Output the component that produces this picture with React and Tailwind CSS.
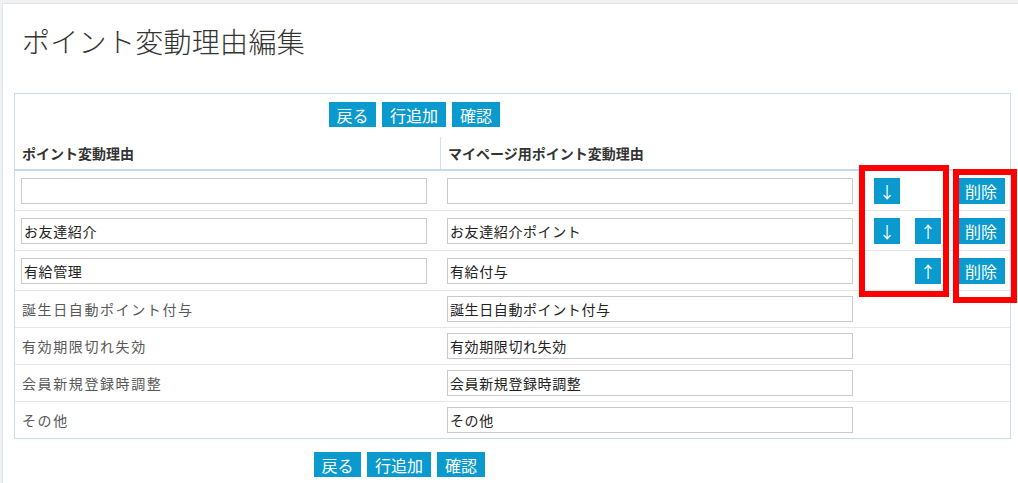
import React from 'react';

const font = { fontFamily: '"Noto Sans CJK JP", "Noto Sans", sans-serif' };

const editRows = [
  { a: '', b: '', down: true, up: false },
  { a: 'お友達紹介', b: 'お友達紹介ポイント', down: true, up: true },
  { a: '有給管理', b: '有給付与', down: false, up: true },
];

const fixedRows = [
  { a: '誕生日自動ポイント付与', b: '誕生日自動ポイント付与' },
  { a: '有効期限切れ失効', b: '有効期限切れ失効' },
  { a: '会員新規登録時調整', b: '会員新規登録時調整' },
  { a: 'その他', b: 'その他' },
];

const BlueBtn = ({ children, className = '' }) => (
  <button className={`h-[25px] bg-[#0b9acd] text-white text-[16px] leading-none flex items-center justify-center ${className}`}>
    {children}
  </button>
);

const TextBox = ({ value }) => (
  <input
    readOnly
    value={value}
    className="w-[406px] h-[26px] border border-[#cacaca] bg-white px-[2px] text-[14px] tracking-[0.6px] text-[#222] outline-none"
    style={font}
  />
);

const Actions = () => (
  <div className="flex gap-[6px]">
    <BlueBtn className="w-[47px]">戻る</BlueBtn>
    <BlueBtn className="w-[64px]">行追加</BlueBtn>
    <BlueBtn className="w-[48px]">確認</BlueBtn>
  </div>
);

export default function App() {
  return (
    <div className="relative min-h-screen bg-[#f1f1f1] pt-[3px] pl-[2px]" style={font}>
      <div className="bg-white border-l border-t border-[#d6e7f5] h-[480px] pl-[11px] pr-[7px]">
        <h1 className="pl-[8px] pt-[17px] h-[89px] text-[28px] leading-[40px] font-light text-[#333] tracking-[0.3px]">
          ポイント変動理由編集
        </h1>

        <div className="border border-[#c6dcf1]">
          <div className="pt-[8px] pb-[10px] pl-[314px]">
            <Actions />
          </div>

          <div className="flex h-[34px] border-b-2 border-[#c3daf1] text-[14px] font-bold text-[#333]">
            <div className="w-[425px] pl-[7px] flex items-center">ポイント変動理由</div>
            <div className="border-l border-[#cfe2f4] pl-[7px] flex items-center">マイページ用ポイント変動理由</div>
          </div>

          {editRows.map((r, i) => (
            <div key={i} className="flex items-center h-[40px] border-b border-[#e6e6e6]">
              <div className="w-[425px] pl-[6px]">
                <TextBox value={r.a} />
              </div>
              <div className="w-[420px] pl-[7px]">
                <TextBox value={r.b} />
              </div>
              <div className="flex pl-[14px] w-[97px]">
                {r.down ? (
                  <BlueBtn className="w-[26px] h-[26px] text-[16px]">↓</BlueBtn>
                ) : (
                  <div className="w-[26px]" />
                )}
                {r.up && <BlueBtn className="ml-[15px] w-[26px] h-[26px] text-[16px]">↑</BlueBtn>}
              </div>
              <BlueBtn className="w-[48px] h-[26px] text-[14px]">削除</BlueBtn>
            </div>
          ))}

          {fixedRows.map((r, i) => {
            const last = i === fixedRows.length - 1;
            return (
              <div
                key={i}
                className={`flex items-center ${last ? 'h-[36px]' : 'h-[37px] border-b border-[#e6e6e6]'}`}
              >
                <div className="w-[425px] pl-[7px] text-[14px] tracking-[1.6px] text-[#585858]">{r.a}</div>
                <div className="w-[420px] pl-[7px]">
                  <TextBox value={r.b} />
                </div>
              </div>
            );
          })}
        </div>

        <div className="pt-[13px] pl-[300px]">
          <Actions />
        </div>
      </div>

      {/* red annotation boxes */}
      <div className="absolute left-[859px] top-[165px] w-[90px] h-[132px] border-[6px] border-[#ff0000]" />
      <div className="absolute left-[953px] top-[169px] w-[64px] h-[134px] border-[6px] border-[#ff0000]" />
    </div>
  );
}
